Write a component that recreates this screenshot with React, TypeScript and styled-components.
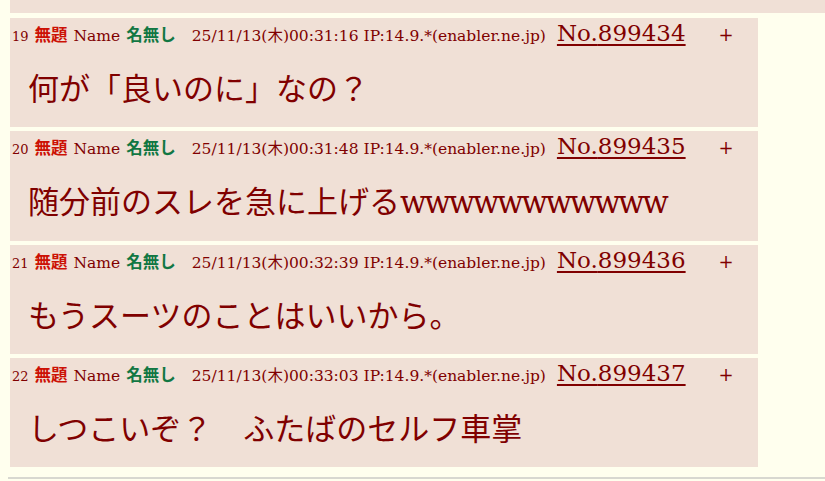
import React from "react";
import styled, { createGlobalStyle } from "styled-components";

const GlobalStyle = createGlobalStyle`
  html, body {
    margin: 0;
    padding: 0;
    background: #ffffee;
    overflow: hidden;
  }
  body {
    font-family: "DejaVu Serif", "Noto Sans CJK JP", serif;
    color: #800000;
  }
`;

const Thread = styled.div`
  padding-left: 10px;
  display: flex;
  flex-direction: column;
  align-items: flex-start;
`;

const PrevBox = styled.div`
  width: 900px;
  height: 13px;
  background: #f0e0d6;
  margin-bottom: 5px;
`;

const Reply = styled.div`
  width: 748px;
  height: 109.25px;
  box-sizing: border-box;
  background: #f0e0d6;
  margin-bottom: 4px;
  padding: 2px 0 0 2px;
`;

const Header = styled.div`
  display: flex;
  align-items: baseline;
  height: 24px;
  font-size: 15.5px;
  white-space: nowrap;
`;

const Num = styled.span`
  font-size: 13px;
  margin-right: 6px;
`;

const Subject = styled.span`
  font-family: "Noto Sans CJK JP", sans-serif;
  font-weight: bold;
  font-size: 16.5px;
  color: #cc1105;
  margin-right: 6px;
`;

const Label = styled.span`
  margin-right: 6px;
`;

const Author = styled.span`
  font-family: "Noto Sans CJK JP", sans-serif;
  font-weight: bold;
  font-size: 16.5px;
  color: #117743;
  margin-right: 16px;
`;

const Stamp = styled.span`
  margin-right: 11px;
`;

const PostNo = styled.a`
  font-size: 23px;
  color: #800000;
  text-decoration: underline;
  text-decoration-thickness: 2px;
  text-underline-offset: 3px;
`;

const Del = styled.span`
  font-size: 18px;
  margin-left: 33px;
`;

const Body = styled.div`
  margin: 27px 0 0 16px;
  font-size: 31px;
  line-height: 36px;
  white-space: nowrap;
`;

// latin runs are a touch narrower in the original serif
const Latin = styled.span`
  letter-spacing: -2.3px;
`;

const Rule = styled.div`
  margin: 6px 0 0 -2px;
  height: 2px;
  width: 900px;
  background: #d8d8d0;
`;

type Post = { n: number; time: string; no: string; text: string; tail?: string };

const posts: Post[] = [
  { n: 19, time: "00:31:16", no: "899434", text: "何が「良いのに」なの？" },
  { n: 20, time: "00:31:48", no: "899435", text: "随分前のスレを急に上げる", tail: "wwwwwwwwwww" },
  { n: 21, time: "00:32:39", no: "899436", text: "もうスーツのことはいいから。" },
  { n: 22, time: "00:33:03", no: "899437", text: "しつこいぞ？　ふたばのセルフ車掌" },
];

export default function App() {
  return (
    <>
      <GlobalStyle />
      <Thread>
        <PrevBox />
        {posts.map((p) => (
          <Reply key={p.n}>
            <Header>
              <Num>{p.n}</Num>
              <Subject>無題</Subject>
              <Label>Name</Label>
              <Author>名無し</Author>
              <Stamp>25/11/13(木){p.time} IP:14.9.*(enabler.ne.jp)</Stamp>
              <PostNo href="#">No.{p.no}</PostNo>
              <Del>+</Del>
            </Header>
            <Body>
              {p.text}
              {p.tail && <Latin>{p.tail}</Latin>}
            </Body>
          </Reply>
        ))}
        <Rule />
      </Thread>
    </>
  );
}
